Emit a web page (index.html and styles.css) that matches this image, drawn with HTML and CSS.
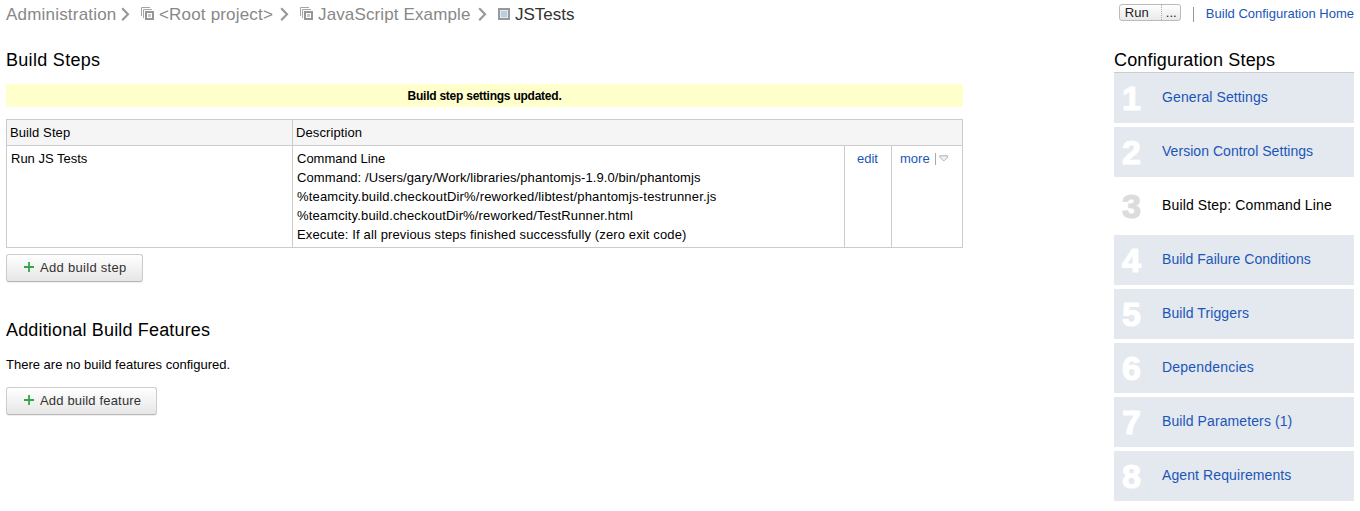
FILE: index.html
```
<!DOCTYPE html>
<html lang="en">
<head>
<meta charset="utf-8">
<title>JSTests - Build Steps</title>
<link rel="stylesheet" href="styles.css">
</head>
<body>
<svg class="defs" width="0" height="0">
  <symbol id="project" viewBox="0 0 13 13">
    <path d="M.5 9V.5H9M2.5 11V2.5H11" fill="none" stroke="#a5a5a5"/>
    <rect x="5" y="5" width="7" height="7" fill="#fff" stroke="#969696" stroke-width="2"/>
    <rect x="7" y="7" width="3" height="3" fill="#b7cfe0"/>
  </symbol>
  <symbol id="chevron" viewBox="0 0 9 14">
    <path d="M1.2 1.2L7 7.2L1.2 13.2" fill="none" stroke="#999" stroke-width="2.2"/>
  </symbol>
  <symbol id="plus" viewBox="0 0 10 10">
    <path d="M5 0V10M0 5H10" fill="none" stroke="#37a34a" stroke-width="1.8"/>
  </symbol>
</svg>
<header class="topbar">
  <nav class="crumbs">
    <a class="c1">Administration</a>
    <svg class="chev"><use href="#chevron"/></svg>
    <svg class="proj"><use href="#project"/></svg>
    <a class="c2">&lt;Root project&gt;</a>
    <svg class="chev"><use href="#chevron"/></svg>
    <svg class="proj"><use href="#project"/></svg>
    <a class="c3">JavaScript Example</a>
    <svg class="chev"><use href="#chevron"/></svg>
    <i class="conf"></i>
    <b class="c4">JSTests</b>
  </nav>
  <div class="actions">
    <div class="run"><span class="run-main">Run</span><span class="run-more">...</span></div>
    <i class="bar"></i>
    <a class="home">Build Configuration Home</a>
  </div>
</header>
<div class="columns">
  <main class="main">
    <h2 class="title first">Build Steps</h2>
    <div class="notice">Build step settings updated.</div>
    <table class="steps">
      <colgroup><col class="col-name"><col class="col-desc"><col class="col-edit"><col class="col-more"></colgroup>
      <tr><th>Build Step</th><th colspan="3">Description</th></tr>
      <tr>
        <td>Run JS Tests</td>
        <td>
          <div>Command Line</div>
          <div class="command">Command: /Users/gary/Work/libraries/phantomjs-1.9.0/bin/phantomjs</div>
          <div class="runner">%teamcity.build.checkoutDir%/reworked/libtest/phantomjs-testrunner.js</div>
          <div class="page">%teamcity.build.checkoutDir%/reworked/TestRunner.html</div>
          <div class="execute">Execute: If all previous steps finished successfully (zero exit code)</div>
        </td>
        <td class="edit"><a>edit</a></td>
        <td class="more"><div class="more-row"><a>more</a><i class="more-bar"></i><svg class="tri" viewBox="0 0 10 7"><path d="M.8 .8H8.7V2L5.4 5.6H4.2L.8 2Z" fill="#f2f2f2" stroke="#b0b0b0"/></svg></div></td>
      </tr>
    </table>
    <a class="btn step"><svg class="plus"><use href="#plus"/></svg><span>Add build step</span></a>
    <h2 class="title second">Additional Build Features</h2>
    <p class="none">There are no build features configured.</p>
    <a class="btn feature"><svg class="plus"><use href="#plus"/></svg><span>Add build feature</span></a>
  </main>
  <aside class="side">
    <h2 class="title">Configuration Steps</h2>
    <ol class="menu">
      <li><b>1</b><a>General Settings</a></li>
      <li><b>2</b><a class="version">Version Control Settings</a></li>
      <li class="current"><b>3</b><a>Build Step: Command Line</a></li>
      <li><b>4</b><a class="failure">Build Failure Conditions</a></li>
      <li><b>5</b><a>Build Triggers</a></li>
      <li><b>6</b><a class="deps">Dependencies</a></li>
      <li><b>7</b><a>Build Parameters (1)</a></li>
      <li><b>8</b><a>Agent Requirements</a></li>
    </ol>
  </aside>
</div>
</body>
</html>
```
FILE: styles.css
```
* { box-sizing: border-box; }
body { margin: 0; font: 13px/19px "Liberation Sans", Arial, sans-serif; color: #000; background: #fff; overflow: hidden; }
a { color: #1a56b8; text-decoration: none; }
.defs { position: absolute; }
.topbar { display: flex; justify-content: space-between; height: 46px; padding: 0 6px; }
.crumbs { display: flex; height: 28px; align-items: center; font-size: 17px; line-height: 28px; white-space: nowrap; }
.crumbs a, .crumbs b { padding-top: 2px; }
.crumbs a { color: #888; }
.crumbs b { font-weight: normal; color: #333; }
.c1 { width: 115px; letter-spacing: .2px; }
.chev { width: 9px; height: 14px; margin-right: 11px; }
.proj { width: 13px; height: 13px; margin: -2px 5px 0 0; }
.c2 { width: 121px; letter-spacing: .18px; }
.c3 { width: 160px; letter-spacing: .13px; }
.conf { width: 12px; height: 12px; margin-right: 5px; border: 2px solid #999; background: #b7cfe0; box-shadow: inset 0 0 0 1px #dde8f0; }
.actions { display: flex; height: 28px; align-items: center; font-size: 13px; white-space: nowrap; }
.run { display: flex; width: 62px; height: 17px; margin-top: -3px; border: 1px solid #bbb; border-radius: 3px; background: linear-gradient(#fff, #e9e9e9); color: #222; line-height: 16px; }
.run-main { width: 42px; padding-left: 5px; border-right: 1px dotted #aaa; }
.run-more { padding-left: 4px; }
.bar { width: 1px; height: 15px; margin: 1px 12px 0; background: #8d9aa8; }
.home { margin-top: -2px; }
.columns { display: flex; justify-content: space-between; padding: 0 6px; }
.main { width: 957px; }
.title { margin: 0; height: 26px; font-size: 18px; font-weight: normal; line-height: 28px; letter-spacing: .16px; white-space: nowrap; }
.first { letter-spacing: .3px; }
.notice { height: 23px; margin-top: 12px; background: #ffc; text-align: center; font-size: 12px; font-weight: bold; line-height: 24px; letter-spacing: -.24px; }
.steps { width: 956px; margin: 12px 0 6px; border-collapse: collapse; table-layout: fixed; }
.steps th, .steps td { border: 1px solid #ccc; text-align: left; vertical-align: top; font-weight: normal; }
.steps th { height: 26px; padding: 3px; background: #f5f5f5; letter-spacing: .1px; }
.steps td { height: 102px; padding: 3px 4px; white-space: nowrap; }
.command { letter-spacing: .088px; }
.runner { letter-spacing: .177px; }
.page { letter-spacing: .14px; }
.execute { letter-spacing: .126px; }
.col-name { width: 286px; }
.col-desc { width: 552px; }
.col-edit { width: 47px; }
.col-more { width: 71px; }
.steps td.edit { padding-left: 12px; }
.steps td.more { padding-left: 8px; }
.more-row { display: flex; align-items: center; }
.more-bar { width: 1px; height: 12px; margin: 0 3px 0 5px; background: #aaa; }
.tri { width: 10px; height: 7px; }
.btn { display: flex; align-items: center; height: 28px; padding-left: 17px; border: 1px solid #ccc; border-bottom-color: #b8b8b8; border-radius: 3px; background: linear-gradient(#fff, #e6e6e6); color: #333; white-space: nowrap; box-shadow: 0 1px 1px #eee; }
.btn span { padding-bottom: 2px; }
.plus { width: 10px; height: 10px; margin: -2px 6px 0 0; }
.step { width: 137px; letter-spacing: .3px; }
.feature { width: 151px; letter-spacing: .17px; }
.second { margin-top: 34px; }
.none { margin: 13px 0 13px; line-height: 19px; }
.side { width: 240px; }
.menu { display: flex; flex-direction: column; gap: 4px; margin: 0; padding: 0; list-style: none; border-top: 1px solid #ccc; }
.menu li { display: flex; align-items: center; height: 50px; background: #e4e8ef; font-size: 14px; letter-spacing: .1px; }
.menu a { padding-bottom: 2px; }
.menu .version, .menu .failure { letter-spacing: .04px; }
.menu .deps { letter-spacing: .2px; }
.menu b { width: 48px; padding: 0 0 0 8px; color: #fff; font-size: 34px; line-height: 48px; -webkit-text-stroke: 1.2px #fff; }
.menu .current { background: #fff; }
.menu .current b { color: #dcdcdc; -webkit-text-stroke-color: #dcdcdc; }
.menu .current a { color: #000; letter-spacing: .14px; }
```
